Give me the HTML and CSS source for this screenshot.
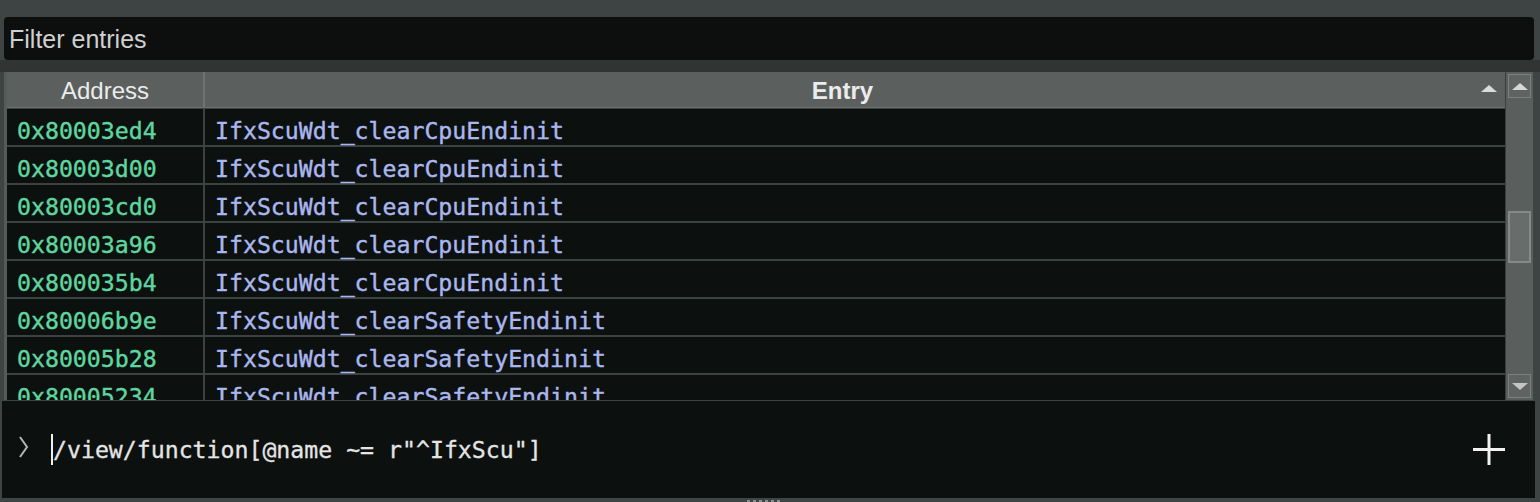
FILE: index.html
```html
<!DOCTYPE html>
<html>
<head>
<meta charset="utf-8">
<link rel="stylesheet" href="styles.css">
</head>
<body>
<div class="app">
  <div class="filter-bar">
    <div class="filter">Filter entries</div>
  </div>
  <div class="band"></div>
  <div class="table-area">
    <div class="table">
      <div class="thead">
        <div class="th th-addr">Address</div>
        <div class="th th-entry">Entry<span class="sort"></span></div>
      </div>
      <div class="tbody">
        <div class="row"><div class="addr">0x80003ed4</div><div class="entry">IfxScuWdt_clearCpuEndinit</div></div>
        <div class="row"><div class="addr">0x80003d00</div><div class="entry">IfxScuWdt_clearCpuEndinit</div></div>
        <div class="row"><div class="addr">0x80003cd0</div><div class="entry">IfxScuWdt_clearCpuEndinit</div></div>
        <div class="row"><div class="addr">0x80003a96</div><div class="entry">IfxScuWdt_clearCpuEndinit</div></div>
        <div class="row"><div class="addr">0x800035b4</div><div class="entry">IfxScuWdt_clearCpuEndinit</div></div>
        <div class="row"><div class="addr">0x80006b9e</div><div class="entry">IfxScuWdt_clearSafetyEndinit</div></div>
        <div class="row"><div class="addr">0x80005b28</div><div class="entry">IfxScuWdt_clearSafetyEndinit</div></div>
        <div class="row"><div class="addr">0x80005234</div><div class="entry">IfxScuWdt_clearSafetyEndinit</div></div>
      </div>
    </div>
    <div class="scrollbar">
      <div class="sbtn"><span class="tri-up"></span></div>
      <div class="track">
        <div class="thumb"></div>
      </div>
      <div class="sbtn"><span class="tri-down"></span></div>
    </div>
  </div>
  <div class="console">
    <span class="prompt">
      <svg width="12" height="24" viewBox="0 0 12 24"><path d="M2 2L9 12L2 22" stroke="#b4b7b5" stroke-width="2" fill="none"/></svg>
    </span>
    <span class="cursor"></span>
    <span class="query">/view/function[@name ~= r"^IfxScu"]</span>
    <span class="plus">
      <svg width="34" height="34" viewBox="0 0 34 34"><path d="M17 1V32M1 16.5H33" stroke="#f2f2f2" stroke-width="3" fill="none"/></svg>
    </span>
  </div>
  <div class="grip"><span class="dots"></span></div>
</div>
</body>
</html>
```
FILE: styles.css
```css
html, body {
  margin: 0;
  padding: 0;
}
body {
  background: #3e4443;
  width: 1540px;
  height: 502px;
  overflow: hidden;
  font-family: "Liberation Sans", Arial, sans-serif;
}
.app {
  display: flex;
  flex-direction: column;
  height: 502px;
}
.filter-bar {
  padding: 17px 6px 0 4px;
  height: 43px;
}
.filter {
  height: 43px;
  background: #0c0f0e;
  border-radius: 4px;
  color: #cfd1d0;
  font-size: 25px;
  line-height: 45px;
  padding-left: 5px;
}
.band {
  height: 12px;
  background: #303534;
}
.table-area {
  display: flex;
  height: 328px;
  padding-left: 4px;
  padding-right: 7px;
  background: #3e4443;
}
.table {
  flex: 1;
  display: flex;
  flex-direction: column;
  border-left: 3px solid #565b5a;
  background: #0c100f;
  overflow: hidden;
}
.thead {
  display: flex;
  height: 35px;
  background: #5b605f;
  border-bottom: 1px solid #6c7170;
  color: #ececec;
  font-size: 24px;
  flex-shrink: 0;
}
.th {
  display: flex;
  align-items: center;
  justify-content: center;
  padding-top: 2px;
}
.th-addr {
  width: 196px;
  border-right: 2px solid #6f7473;
}
.th-entry {
  flex: 1;
  font-weight: bold;
  padding-right: 25px;
  position: relative;
}
.sort {
  position: absolute;
  right: 8px;
  top: 13px;
  width: 0;
  height: 0;
  border-left: 8px solid transparent;
  border-right: 8px solid transparent;
  border-bottom: 7px solid #dcdcdc;
}
.tbody {
  display: flex;
  flex-direction: column;
  border-top: 1px solid #3c4241;
}
.row {
  display: flex;
  height: 36px;
  border-bottom: 2px solid #3c4241;
  font-family: "DejaVu Sans Mono", "Liberation Mono", monospace;
  font-size: 23.2px;
  flex-shrink: 0;
  -webkit-text-stroke: 0.4px currentColor;
}
.addr {
  width: 186px;
  padding-left: 10px;
  border-right: 2px solid #3c4241;
  color: #5fd69f;
  line-height: 44px;
}
.entry {
  flex: 1;
  padding-left: 10px;
  color: #aab7ee;
  line-height: 44px;
}
.scrollbar {
  width: 28px;
  display: flex;
  flex-direction: column;
  background: #5a5f5e;
  border-left: 1px solid #3a3f3e;
  box-sizing: border-box;
  padding: 2px 2px 2px 2px;
}
.sbtn {
  height: 24px;
  box-sizing: border-box;
  border: 1px solid #7c8180;
  background: #5f6463;
  display: flex;
  align-items: center;
  justify-content: center;
  flex-shrink: 0;
}
.tri-up {
  width: 0; height: 0;
  border-left: 8px solid transparent;
  border-right: 8px solid transparent;
  border-bottom: 7px solid #d6d8d7;
}
.tri-down {
  width: 0; height: 0;
  border-left: 8px solid transparent;
  border-right: 8px solid transparent;
  border-top: 7px solid #c4c6c5;
}
.track {
  flex: 1;
  padding-top: 113px;
}
.thumb {
  height: 52px;
  box-sizing: border-box;
  border: 2px solid #858a89;
  background: #686d6c;
}
.console {
  margin: 1px 5px 0 2px;
  height: 97px;
  background: #0c100f;
  display: flex;
  align-items: center;
  font-family: "DejaVu Sans Mono", "Liberation Mono", monospace;
  font-size: 23.2px;
  color: #e4e5e4;
  -webkit-text-stroke: 0.3px currentColor;
}
.prompt {
  display: flex;
  margin-left: 16px;
  width: 33px;
  margin-top: -6px;
}
.cursor {
  width: 2px;
  height: 31px;
  background: #f0f0f0;
}
.query {
  flex: 1;
  margin-left: 0;
}
.plus {
  display: flex;
  margin-right: 29px;
}
.grip {
  flex: 1;
  display: flex;
  justify-content: center;
  align-items: flex-end;
}
.dots {
  width: 34px;
  height: 2px;
  margin-left: -12px;
  background: repeating-linear-gradient(90deg, #8a8f8e 0 3px, transparent 3px 6px);
}
```
